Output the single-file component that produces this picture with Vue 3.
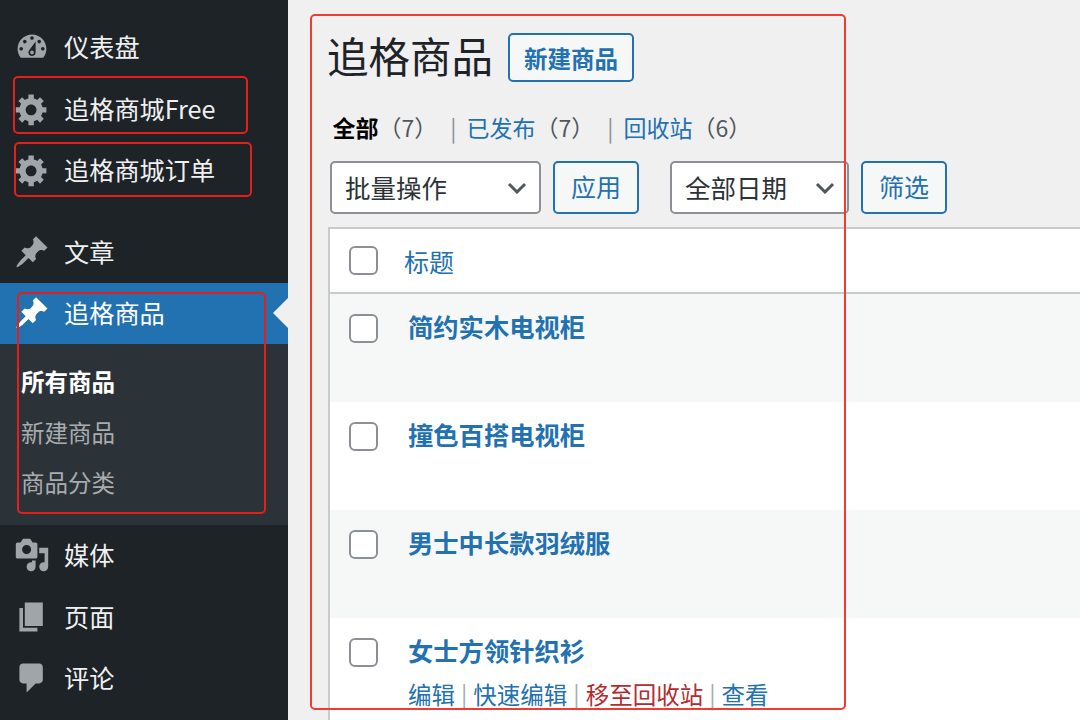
<template>
  <div class="page">
    <aside class="sidebar">
      <div v-for="item in topMenu" :key="item.label" class="menu-item" :class="{ gap: item.gap }">
        <svg class="menu-icon" viewBox="0 0 20 20"><path :d="icons[item.icon]" /></svg>
        <span>{{ item.label }}</span>
      </div>

      <div class="menu-item active">
        <svg class="menu-icon" viewBox="0 0 20 20"><path :d="icons.pin" /></svg>
        <span>追格商品</span>
      </div>
      <div class="submenu">
        <div class="sub-item current">所有商品</div>
        <div class="sub-item">新建商品</div>
        <div class="sub-item">商品分类</div>
      </div>

      <div v-for="item in bottomMenu" :key="item.label" class="menu-item">
        <svg class="menu-icon" viewBox="0 0 20 20"><path :d="icons[item.icon]" /></svg>
        <span>{{ item.label }}</span>
      </div>
    </aside>

    <main class="content">
      <div class="heading">
        <h1>追格商品</h1>
        <button class="add-btn">新建商品</button>
      </div>

      <ul class="tabs">
        <li><b>全部</b><span class="count">（7）</span></li>
        <li><i>|</i><a>已发布</a><span class="count">（7）</span></li>
        <li><i>|</i><a>回收站</a><span class="count">（6）</span></li>
      </ul>

      <div class="toolbar">
        <div class="select bulk">
          <span>批量操作</span>
          <svg viewBox="0 0 20 12"><path d="M2 2l8 8 8-8" /></svg>
        </div>
        <button class="action">应用</button>
        <div class="select dates">
          <span>全部日期</span>
          <svg viewBox="0 0 20 12"><path d="M2 2l8 8 8-8" /></svg>
        </div>
        <button class="action">筛选</button>
      </div>

      <div class="table">
        <div class="table-head">
          <span class="check"></span>
          <a>标题</a>
        </div>
        <div v-for="(row, i) in rows" :key="row" class="row" :class="{ alt: i % 2 === 0 }">
          <span class="check"></span>
          <div class="cell">
            <a class="row-title">{{ row }}</a>
            <div v-if="i === 3" class="row-actions">
              <a>编辑</a><i>|</i><a>快速编辑</a><i>|</i><a class="trash">移至回收站</a><i>|</i><a>查看</a>
            </div>
          </div>
        </div>
      </div>
    </main>

    <div class="mark mark-free"></div>
    <div class="mark mark-order"></div>
    <div class="mark mark-sub"></div>
    <div class="mark mark-main"></div>
  </div>
</template>

<script setup>
const icons = {
  dashboard:
    "M3.76 16h12.48c1.1-1.37 1.76-3.11 1.76-5 0-4.42-3.58-8-8-8s-8 3.58-8 8c0 1.89.66 3.63 1.76 5zM10 4c.55 0 1 .45 1 1s-.45 1-1 1-1-.45-1-1 .45-1 1-1zM6 6c.55 0 1 .45 1 1s-.45 1-1 1-1-.45-1-1 .45-1 1-1zm8 0c.55 0 1 .45 1 1s-.45 1-1 1-1-.45-1-1 .45-1 1-1zm-5.37 5.55L12 7v6c0 1.1-.9 2-2 2s-2-.9-2-2c0-.57.24-1.08.63-1.45zM4 10c.55 0 1 .45 1 1s-.45 1-1 1-1-.45-1-1 .45-1 1-1zm12 0c.55 0 1 .45 1 1s-.45 1-1 1-1-.45-1-1 .45-1 1-1zm-5 3c0-.55-.45-1-1-1s-1 .45-1 1 .45 1 1 1 1-.45 1-1z",
  gear:
    "M18 12h-2.18c-.17.7-.44 1.35-.81 1.93l1.54 1.54-2.1 2.1-1.54-1.54c-.58.36-1.23.63-1.91.79V19H8v-2.18c-.68-.16-1.33-.43-1.91-.79l-1.54 1.54-2.12-2.12 1.54-1.54c-.36-.58-.63-1.23-.79-1.91H1V9.03h2.17c.16-.7.44-1.35.8-1.94L2.43 5.55l2.1-2.1 1.54 1.54c.58-.37 1.24-.64 1.93-.81V2h3v2.18c.68.16 1.33.43 1.91.79l1.54-1.54 2.12 2.12-1.54 1.54c.36.59.64 1.24.8 1.94H18V12zm-8.5 1.5c1.66 0 3-1.34 3-3s-1.34-3-3-3-3 1.34-3 3 1.34 3 3 3z",
  pin:
    "M10.44 3.02l1.82-1.82 6.36 6.35-1.83 1.82c-1.05-.68-2.48-.57-3.41.36l-.75.75c-.92.93-1.04 2.35-.35 3.41l-1.83 1.82-2.41-2.41-2.8 2.79c-.42.42-3.38 2.71-3.8 2.29s1.86-3.39 2.28-3.81l2.79-2.79L4.1 9.36l1.83-1.82c1.05.69 2.48.57 3.4-.36l.75-.75c.93-.92 1.05-2.35.36-3.41z",
  media:
    "M13 11V4c0-.55-.45-1-1-1h-1.67L9 1H5L3.67 3H2c-.55 0-1 .45-1 1v7c0 .55.45 1 1 1h10c.55 0 1-.45 1-1zM7 4.5c1.38 0 2.5 1.12 2.5 2.5S8.38 9.5 7 9.5 4.5 8.38 4.5 7 5.62 4.5 7 4.5zM14 6h5v10.5c0 1.38-1.12 2.5-2.5 2.5S14 17.88 14 16.5s1.12-2.5 2.5-2.5c.17 0 .34.02.5.05V9h-3V6zm-4 8.05V13h2v3.5c0 1.38-1.12 2.5-2.5 2.5S7 17.88 7 16.5 8.12 14 9.5 14c.17 0 .34.02.5.05z",
  page: "M6 15V2h10v13H6zm-1 1h8v2H3V5h2v11z",
  comment:
    "M5 2h9c1.1 0 2 .9 2 2v7c0 1.1-.9 2-2 2h-2l-5 5v-5H5c-1.1 0-2-.9-2-2V4c0-1.1.9-2 2-2z",
};

const topMenu = [
  { label: "仪表盘", icon: "dashboard" },
  { label: "追格商城Free", icon: "gear" },
  { label: "追格商城订单", icon: "gear" },
  { label: "文章", icon: "pin", gap: true },
];

const bottomMenu = [
  { label: "媒体", icon: "media" },
  { label: "页面", icon: "page" },
  { label: "评论", icon: "comment" },
];

const rows = ["简约实木电视柜", "撞色百搭电视柜", "男士中长款羽绒服", "女士方领针织衫"];
</script>

<style>
html,
body {
  margin: 0;
  overflow: hidden;
}
</style>

<style scoped>
.page {
  position: relative;
  display: flex;
  width: 1080px;
  height: 720px;
  overflow: hidden;
  background: #f0f0f1;
  color: #1d2327;
  font-family: "Noto Sans CJK SC", "Noto Sans", sans-serif;
}

/* Sidebar */
.sidebar {
  flex: 0 0 288px;
  padding-top: 16.5px;
  background: #1d2327;
  box-sizing: border-box;
}

.menu-item {
  position: relative;
  display: flex;
  align-items: center;
  gap: 14px;
  height: 61.5px;
  padding-left: 14px;
  font-size: 25.2px;
  color: #f0f0f1;
}

.menu-item span {
  margin-bottom: 2px;
}

.menu-item.gap {
  margin-top: 20px;
}

.menu-icon {
  flex: none;
  width: 36px;
  height: 36px;
  fill: #a0a5aa;
}

.menu-item.active {
  background: #2271b1;
  color: #fff;
}

.menu-item.active .menu-icon {
  fill: #fff;
}

.menu-item.active::after {
  content: "";
  position: absolute;
  right: 0;
  top: 50%;
  margin-top: -15px;
  border: 15px solid transparent;
  border-right-color: #f0f0f1;
  border-left-width: 0;
}

.submenu {
  padding: 14px 0 15px;
  background: #2c3338;
}

.sub-item {
  height: 50.5px;
  padding-left: 21px;
  font-size: 23.5px;
  line-height: 47px;
  color: #a9acaf;
}

.sub-item.current {
  font-weight: 700;
  color: #fff;
}

/* Main column */
.content {
  flex: 1;
  min-width: 0;
  padding: 33px 0 0 40px;
}

.heading {
  display: flex;
  align-items: flex-start;
  gap: 15px;
  height: 48px;
}

h1 {
  margin: -2px 0 0 -1px;
  font-size: 41.5px;
  font-weight: 400;
  line-height: 48px;
}

button {
  font-family: inherit;
  box-sizing: border-box;
  background: #f6f7f7;
  border: 2px solid #2271b1;
  border-radius: 5px;
  color: #2271b1;
  padding: 0 0 3px;
}

.add-btn {
  width: 126px;
  height: 49px;
  font-size: 23.5px;
  font-weight: 700;
  padding-bottom: 0;
}

.tabs {
  display: flex;
  margin: 22px 0 0;
  padding: 0 0 0 4.5px;
  height: 48px;
  list-style: none;
  font-size: 23px;
  line-height: 48px;
  color: #50575e;
}

.tabs b {
  font-weight: 700;
  color: #000;
}

.tabs a {
  color: #2271b1;
}

.tabs i {
  font-style: normal;
  color: #8c8f94;
  margin: 0 10px 0 13px;
}

.tabs .count {
  color: #50575e;
}

.toolbar {
  display: flex;
  margin-top: 10px;
  padding-left: 2px;
}

.select {
  display: flex;
  align-items: center;
  justify-content: space-between;
  box-sizing: border-box;
  height: 53px;
  padding: 0 12px 0 13px;
  background: #fff;
  border: 2px solid #8c8f94;
  border-radius: 5px;
  font-size: 25.5px;
  color: #2c3338;
}

.select span {
  margin-bottom: 2px;
}

.select svg {
  width: 20px;
  height: 12px;
  fill: none;
  stroke: #50575e;
  stroke-width: 3;
}

.bulk {
  width: 211px;
}

.dates {
  width: 179px;
  margin-left: 31px;
}

.action {
  width: 86px;
  height: 53px;
  margin-left: 12px;
  font-size: 25px;
}

.table {
  box-sizing: border-box;
  width: 800px;
  margin-top: 13px;
  background: #fff;
  border: 2px solid #c9cacd;
  border-width: 2px 0 0 2px;
}

.table-head {
  display: flex;
  align-items: center;
  height: 63px;
  border-bottom: 2px solid #c9cacd;
  font-size: 25px;
  color: #2271b1;
}

.table-head .check {
  margin: 0 26px 0 19px;
}

.row {
  display: flex;
  align-items: flex-start;
  height: 108px;
  background: #fff;
}

.row.alt {
  background: #f6f7f7;
}

.row .check {
  margin: 20px 30px 0 19px;
}

.check {
  flex: none;
  box-sizing: border-box;
  width: 29px;
  height: 29px;
  background: #fff;
  border: 2px solid #8c8f94;
  border-radius: 6px;
}

.cell {
  padding-top: 14px;
}

.row-title {
  display: block;
  font-size: 25.3px;
  font-weight: 700;
  line-height: 36px;
  color: #2271b1;
}

.row-actions {
  margin-top: 8px;
  font-size: 23.5px;
  line-height: 36px;
  color: #2271b1;
}

.row-actions i {
  font-style: normal;
  color: #a7aaad;
  margin: 0 6px;
}

.row-actions .trash {
  color: #b32d2e;
}

/* Red annotation boxes drawn over the screenshot */
.mark {
  position: absolute;
  box-sizing: border-box;
  border: 2px solid #e3201b;
  border-radius: 5px;
  pointer-events: none;
}

.mark-free {
  left: 13px;
  top: 76px;
  width: 235px;
  height: 58px;
}

.mark-order {
  left: 14px;
  top: 142px;
  width: 238px;
  height: 55px;
}

.mark-sub {
  left: 17px;
  top: 292px;
  width: 249px;
  height: 222px;
}

.mark-main {
  left: 310px;
  top: 14px;
  width: 536px;
  height: 696px;
  border-color: #f23b30;
}
</style>
